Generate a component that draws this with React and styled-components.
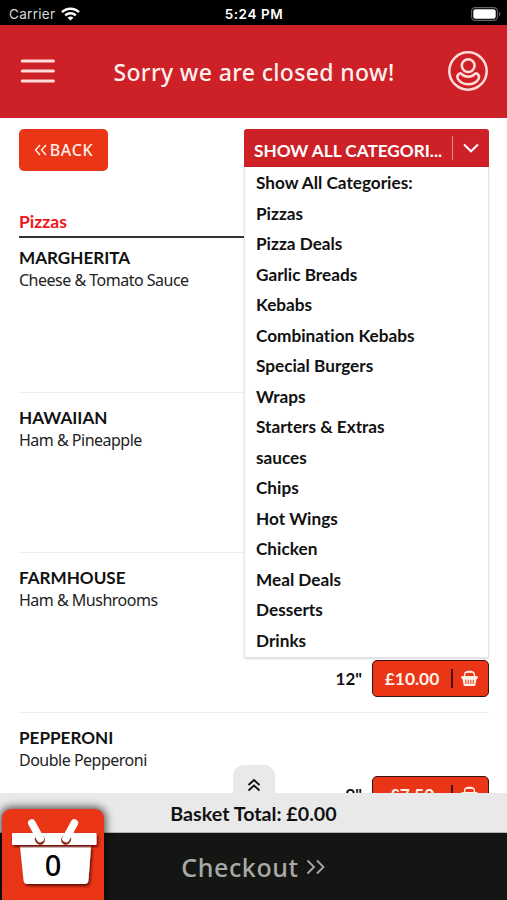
import styled, { createGlobalStyle } from 'styled-components';

const GlobalStyle = createGlobalStyle`
  * {
    box-sizing: border-box;
  }
  body {
    margin: 0;
    background: #fff;
    font-variant-ligatures: none;
  }
`

const lato = `'Lato', sans-serif`
const humanist = `'Noto Sans', 'Open Sans', sans-serif`
const red = '#cd2027'
const orange = '#ea3516'

const Screen = styled.div`
  width: 507px;
  height: 900px;
  display: flex;
  flex-direction: column;
  overflow: hidden;
  background: #fff;
  color: #111;
  font-family: ${lato};
`

const StatusBar = styled.div`
  height: 25px;
  flex: none;
  display: grid;
  grid-template-columns: 1fr auto 1fr;
  align-items: center;
  padding: 2px 6px 0 9px;
  background: #000;
  color: #fff;
  font-family: 'Inter', sans-serif;
  font-size: 13.5px;
`

const Carrier = styled.div`
  display: flex;
  align-items: center;
  gap: 6px;
  color: #d8d8d8;
  letter-spacing: 0.3px;
`

const Clock = styled.div`
  margin-right: 2px;
  font-weight: 600;
  letter-spacing: 0.6px;
`

const Battery = styled.svg`
  justify-self: end;
`

const Header = styled.header`
  height: 93px;
  flex: none;
  display: flex;
  align-items: center;
  justify-content: space-between;
  padding: 0 18px 2px 20px;
  background: ${red};
`

const HeaderTitle = styled.h1`
  margin: 3px 0 0 5px;
  color: #fff0ee;
  font-family: ${humanist};
  font-size: 23px;
  font-weight: 500;
  line-height: 32px;
  letter-spacing: 0.35px;
  white-space: nowrap;
`

const Content = styled.main`
  flex: 1;
  min-height: 0;
  padding: 11px 18px 0 19px;
  overflow: hidden;
`

const Toolbar = styled.div`
  display: flex;
  justify-content: space-between;
  align-items: flex-start;
`

const BackButton = styled.button`
  width: 89px;
  height: 42px;
  display: flex;
  align-items: center;
  justify-content: center;
  gap: 3px;
  padding: 0;
  border: 0;
  border-radius: 5px;
  background: ${orange};
  color: #fff0e8;
  font-family: ${humanist};
  font-size: 16px;
  font-weight: 500;
  letter-spacing: 0.7px;
`

const Select = styled.div`
  position: relative;
  width: 245px;
`

const SelectControl = styled.div`
  height: 38px;
  display: flex;
  align-items: center;
  padding-left: 10px;
  border-radius: 3px 3px 0 0;
  background: ${red};
  color: #fff;
`

const SelectValue = styled.span`
  flex: 1;
  padding-top: 6px;
  font-size: 17.2px;
  font-weight: 700;
  line-height: 22px;
  white-space: nowrap;
`

const SelectDivider = styled.span`
  width: 1px;
  height: 24px;
  margin-right: 10px;
  background: #e58a8d;
`

const Menu = styled.ul`
  position: absolute;
  top: 38px;
  left: 0;
  z-index: 2;
  width: 245px;
  height: 491px;
  margin: 0;
  padding: 1px 0 0 11px;
  list-style: none;
  background: #fff;
  border: 1px solid #e6e6e8;
  border-top: 0;
  border-radius: 0 0 2px 2px;
  box-shadow: 0 1px 2px rgba(0, 0, 0, 0.16);
`

const MenuOption = styled.li`
  height: 30.53px;
  font-size: 17.2px;
  font-weight: 700;
  line-height: 30.53px;
`

const SectionTitle = styled.h2`
  height: 38px;
  margin: 29px 0 0;
  padding-top: 11px;
  border-bottom: 2px solid #333;
  color: #ee1619;
  font-size: 17.5px;
  font-weight: 700;
  line-height: 22px;
`

const MenuItem = styled.section`
  height: ${props => props.$first ? '155px' : '160px'};
  display: flex;
  justify-content: space-between;
  padding-top: ${props => props.$first ? '8px' : '13px'};
  border-bottom: 1px solid #eee;
`

const ItemName = styled.h3`
  margin: 0;
  font-size: 17.1px;
  font-weight: 700;
  line-height: 23px;
`

const ItemDescription = styled.p`
  margin: 0;
  color: #222;
  font-family: ${humanist};
  font-size: 16px;
  line-height: 23px;
  letter-spacing: -0.5px;
`

const SizeRow = styled.div`
  height: 37px;
  display: flex;
  align-items: center;
  gap: 10px;
  margin-top: ${props => props.$second ? '94px' : '50px'};
  font-size: 17px;
  font-weight: 700;
`

const PriceButton = styled.button`
  width: 117px;
  height: 37px;
  display: flex;
  align-items: center;
  padding: 0 10px 0 0;
  border: 1.5px solid #3a1410;
  border-radius: 5px;
  background: ${orange};
  color: #fff0e8;
  font-family: ${lato};
  font-size: 17.4px;
  font-weight: 700;
`

const Price = styled.span`
  flex: 1;
  text-align: center;
`

const PriceDivider = styled.span`
  width: 2px;
  height: 19px;
  margin-right: 8px;
  background: #4a130c;
`

const Footer = styled.footer`
  position: relative;
  flex: none;
`

const ExpandTab = styled.div`
  position: absolute;
  top: -28px;
  left: 233px;
  width: 42px;
  height: 29px;
  display: flex;
  justify-content: center;
  padding-top: 13px;
  border-radius: 11px 11px 0 0;
  background: #e9e9e9;
`

const BasketTotal = styled.div`
  height: 40px;
  background: #e9e9e9;
  border-bottom: 1px solid #b5b5b5;
  font-size: 19.7px;
  font-weight: 700;
  line-height: 41px;
  text-align: center;
`

const Checkout = styled.div`
  height: 67px;
  display: flex;
  align-items: center;
  justify-content: center;
  gap: 7px;
  padding-top: 1px;
  background: #131612;
  color: #a9aaa8;
  font-family: ${humanist};
  font-size: 25px;
  font-weight: 500;
  letter-spacing: 0.6px;
`

const BasketTile = styled.div`
  position: absolute;
  left: 2px;
  bottom: 0;
  width: 102px;
  height: 91px;
  border-radius: 9px 9px 0 0;
  background: ${orange};
  box-shadow: 0 0 8px 2px rgba(0, 0, 0, 0.65);
`

const BasketCount = styled.span`
  position: absolute;
  top: 37px;
  left: 0;
  width: 102px;
  color: #000;
  font-family: ${humanist};
  font-size: 29px;
  font-weight: 500;
  line-height: 38px;
  text-align: center;
`

const categories = [
  'Show All Categories:',
  'Pizzas',
  'Pizza Deals',
  'Garlic Breads',
  'Kebabs',
  'Combination Kebabs',
  'Special Burgers',
  'Wraps',
  'Starters & Extras',
  'sauces',
  'Chips',
  'Hot Wings',
  'Chicken',
  'Meal Deals',
  'Desserts',
  'Drinks',
]

const pizzas = [
  { name: 'MARGHERITA', description: 'Cheese & Tomato Sauce' },
  { name: 'HAWAIIAN', description: 'Ham & Pineapple' },
  { name: 'FARMHOUSE', description: 'Ham & Mushrooms', size: '12"', price: '£10.00', second: true },
  { name: 'PEPPERONI', description: 'Double Pepperoni', size: '9"', price: '£7.50' },
]

const WifiIcon = () => (
  <svg width="19" height="14" viewBox="0 0 19 14" fill="none" stroke="#fff" strokeWidth="2.5">
    <path d="M1 5.2C5.6.5 13.4.5 18 5.2" />
    <path d="M4.2 8.3c3-2.8 7.6-2.8 10.6 0" />
    <path d="M9.5 13.6 6.6 10.7c1.6-1.5 4.2-1.5 5.8 0z" fill="#fff" stroke="none" />
  </svg>
)

const BatteryIcon = () => (
  <Battery width="30" height="14" viewBox="0 0 30 14">
    <rect x="0.6" y="0.6" width="25.8" height="12.8" rx="3.6" fill="none" stroke="#666" strokeWidth="1.1" />
    <rect x="2.3" y="2.3" width="22.4" height="9.4" rx="2.2" fill="#fff" />
    <path d="M28 4.8c1.8.6 1.8 3.8 0 4.4z" fill="#666" />
  </Battery>
)

const HamburgerIcon = () => (
  <svg width="36" height="26" viewBox="0 0 36 26" stroke="#ffdcd9" strokeWidth="3" strokeLinecap="round">
    <path d="M2.2 3h31.2M2.2 13h31.2M2.2 23h31.2" />
  </svg>
)

const UserIcon = () => (
  <svg width="42" height="42" viewBox="0 0 42 42" fill="none" stroke="#ffdcd9" strokeWidth="2.5">
    <circle cx="21" cy="21" r="18.7" />
    <circle cx="21.2" cy="15.6" r="6.4" />
    <path d="M12.4 23.6c-2 1.3-2.5 3.4-1.600 5.200 2 3.800 5.900 5.400 10.400 5.400s8.400-1.600 10.400-5.400c.9-1.800.4-3.900-1.600-5.200-.8-.5-1.500-.3-2.100.3-1.800 1.900-4.100 2.800-6.700 2.800s-4.900-.9-6.700-2.800c-.6-.6-1.300-.8-2.100-.3z" />
  </svg>
)

const PriceBasketIcon = () => (
  <svg width="17" height="17" viewBox="0 0 17 17">
    <path d="M3.6 7V5.2C3.6 3 5 1.7 7 1.7h3c2 0 3.4 1.3 3.4 3.500V7" fill="none" stroke="#fff0e8" strokeWidth="1.4" />
    <rect x="6" y="0.7" width="5" height="2" rx="0.5" fill="#fff0e8" />
    <rect x="0.3" y="6" width="16.4" height="3" rx="1" fill="#fff0e8" />
    <path d="M1.500 9h14l-1.200 6.200c-.1.500-.5.800-1 .8H3.700c-.5 0-.9-.3-1-.8z" fill="#fff0e8" />
    <path d="M4.600 9.800l.4 4.200M7.200 9.800V14M9.800 9.800V14M12.400 9.800 12 14" stroke={orange} strokeWidth="1" />
  </svg>
)

const BasketIcon = () => (
  <svg width="102" height="91" viewBox="0 0 102 91">
    <defs>
      <filter id="basketShadow" x="-20%" y="-20%" width="140%" height="140%">
        <feDropShadow dx="1.5" dy="2" stdDeviation="1.5" floodColor="#400" floodOpacity="0.8" />
      </filter>
    </defs>
    <g filter="url(#basketShadow)">
      <path d="M18 37.500h71l-2.500 33.500c-.2 2.500-1.500 4-4 4h-57c-2.500 0-3.800-1.500-4-4z" fill="#fff" />
    </g>
    <rect x="10" y="24" width="84.5" height="12" rx="1" fill="#fff" filter="url(#basketShadow)" />
    <g strokeLinecap="round">
      <path d="M37.500 30l.7 1M64.500 30l-.7 1" stroke="#8d2a1a" strokeWidth="9.500" />
      <path d="M29.800 14l8.400 15.500M72.400 14 64 29.500" stroke="#fff" strokeWidth="7.600" />
    </g>
  </svg>
)

const App = () => {
  return (
    <Screen>
      <GlobalStyle />
      <StatusBar>
        <Carrier>Carrier <WifiIcon /></Carrier>
        <Clock>5:24 PM</Clock>
        <BatteryIcon />
      </StatusBar>
      <Header>
        <HamburgerIcon />
        <HeaderTitle>Sorry we are closed now!</HeaderTitle>
        <UserIcon />
      </Header>
      <Content>
        <Toolbar>
          <BackButton>
            <svg width="13" height="12" viewBox="0 0 13 12" fill="none" stroke="#fff0e8" strokeWidth="1.4">
              <path d="M6 1 1.5 6 6 11M12 1 7.5 6l4.5 5" />
            </svg>
            BACK
          </BackButton>
          <Select>
            <SelectControl>
              <SelectValue>SHOW ALL CATEGORI...</SelectValue>
              <SelectDivider />
              <svg width="26" height="10" viewBox="0 0 26 10" fill="none" stroke="#fff" strokeWidth="2">
                <path d="M1 1.5 8 8.3l7-6.8" />
              </svg>
            </SelectControl>
            <Menu>
              {categories.map(category => (
                <MenuOption key={category}>{category}</MenuOption>
              ))}
            </Menu>
          </Select>
        </Toolbar>
        <SectionTitle>Pizzas</SectionTitle>
        {pizzas.map((pizza, index) => (
          <MenuItem key={pizza.name} $first={index === 0}>
            <div>
              <ItemName>{pizza.name}</ItemName>
              <ItemDescription>{pizza.description}</ItemDescription>
            </div>
            {pizza.price && (
              <SizeRow $second={pizza.second}>
                {pizza.size}
                <PriceButton>
                  <Price>{pizza.price}</Price>
                  <PriceDivider />
                  <PriceBasketIcon />
                </PriceButton>
              </SizeRow>
            )}
          </MenuItem>
        ))}
      </Content>
      <Footer>
        <ExpandTab>
          <svg width="14" height="14" viewBox="0 0 14 14" fill="none" stroke="#111" strokeWidth="1.9">
            <path d="M1.5 7 7 2l5.500 5M1.500 12.500l5.500-5 5.500 5" />
          </svg>
        </ExpandTab>
        <BasketTotal>Basket Total: £0.00</BasketTotal>
        <Checkout>
          Checkout
          <svg width="20" height="16" viewBox="0 0 20 16" fill="none" stroke="#a9aaa8" strokeWidth="1.8">
            <path d="M1.500 1.500 8 8l-6.500 6.500M11 1.500 17.500 8 11 14.500" />
          </svg>
        </Checkout>
        <BasketTile>
          <BasketIcon />
          <BasketCount>0</BasketCount>
        </BasketTile>
      </Footer>
    </Screen>
  )
}

export default App;
